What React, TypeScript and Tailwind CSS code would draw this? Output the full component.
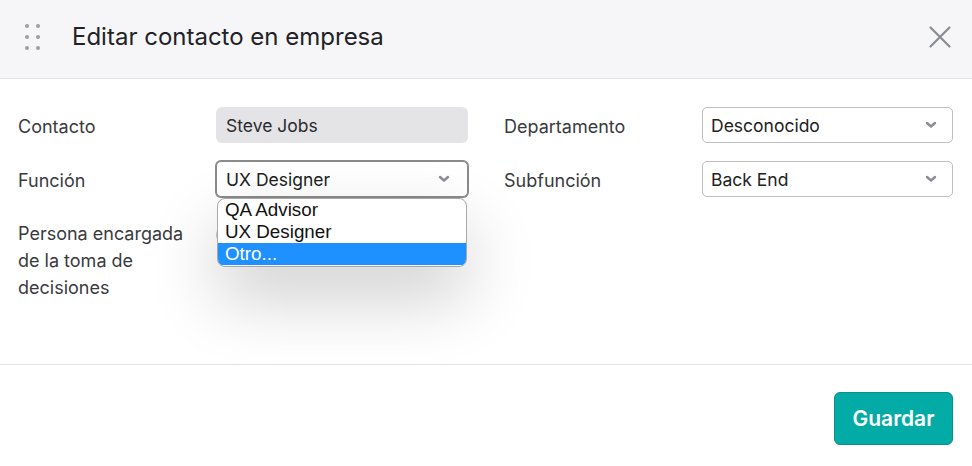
import React from 'react';

const font = { fontFamily: 'Inter, "Noto Sans", sans-serif' };

const Chevron = () => (
  <svg width="12" height="8" viewBox="0 0 12 8" className="shrink-0">
    <path d="M2 2l4 3.5L10 2" fill="none" stroke="#8c8c94" strokeWidth="2.4" strokeLinecap="round" strokeLinejoin="round" />
  </svg>
);

const Select = ({ value, focused }: { value: string; focused?: boolean }) => (
  <div
    className={
      focused
        ? 'flex h-[36px] items-center justify-between rounded-[5px] border border-[#8a8a8a] ring-1 ring-[#8a8a8a] bg-white pl-[9px] pr-[17px] text-[17.5px] text-[#222]'
        : 'flex h-[36px] items-center justify-between rounded-[5px] border border-[#bdbdc2] bg-white pl-[8px] pr-[15px] text-[17.5px] text-[#222]'
    }
  >
    <span className="pt-[2px]">{value}</span>
    <Chevron />
  </div>
);

const Label = ({ children }: { children: React.ReactNode }) => (
  <div className="flex h-[36px] items-center pt-[2px] text-[18px] text-[#3a3a3e]">{children}</div>
);

export default function App() {
  return (
    <div className="flex h-[466px] w-full flex-col bg-white" style={font}>
      {/* header */}
      <div className="flex h-[79px] shrink-0 items-center border-b border-[#e4e4e7] bg-[#f6f6f8] pb-[4px] pl-[25px] pr-[21px]">
        <div className="grid grid-cols-2 gap-x-[7px] gap-y-[7px]">
          <span className="h-[4px] w-[4px] rounded-full bg-[#9d9da6]" />
          <span className="h-[4px] w-[4px] rounded-full bg-[#9d9da6]" />
          <span className="h-[4px] w-[4px] rounded-full bg-[#9d9da6]" />
          <span className="h-[4px] w-[4px] rounded-full bg-[#9d9da6]" />
          <span className="h-[4px] w-[4px] rounded-full bg-[#9d9da6]" />
          <span className="h-[4px] w-[4px] rounded-full bg-[#9d9da6]" />
        </div>
        <h1 className="ml-[32px] flex-1 text-[24px] font-normal text-[#222226]">Editar contacto en empresa</h1>
        <svg width="22" height="22" viewBox="0 0 22 22">
          <path d="M1.5 1.5l19 19M20.5 1.5l-19 19" stroke="#8b8b94" strokeWidth="2.2" strokeLinecap="round" />
        </svg>
      </div>

      {/* body */}
      <div className="h-[285px] shrink-0 px-[18px] pt-[28px] pr-[19px]">
        <div className="grid grid-cols-[198px_252px_36px_198px_1fr] gap-y-[18px]">
          <Label>Contacto</Label>
          <div className="flex h-[36px] items-center rounded-[6px] bg-[#e4e4e7] pl-[10px] pt-[2px] text-[17.5px] text-[#2a2a2e]">Steve Jobs</div>
          <div />
          <Label>Departamento</Label>
          <Select value="Desconocido" />

          <Label>Función</Label>
          <div className="relative">
            <Select value="UX Designer" focused />
            <div
              className="absolute left-[1px] right-[1px] top-[37px] z-10 overflow-hidden rounded-[8px] border border-[#a8a8a8] bg-white pb-[1px] text-[18.8px] leading-[22px] text-[#111] shadow-[0_30px_70px_rgba(0,0,0,0.2)]"
              style={{ fontFamily: '"Liberation Sans", Arial, sans-serif' }}
            >
              <div className="h-[22px] pl-[7px]">QA Advisor</div>
              <div className="h-[22px] pl-[7px]">UX Designer</div>
              <div className="h-[22px] bg-[#1e90ff] pl-[7px] text-white">Otro...</div>
            </div>
          </div>
          <div />
          <Label>Subfunción</Label>
          <Select value="Back End" />

          <div className="pt-[5px] text-[18px] leading-[27px] text-[#3a3a3e]">
            Persona encargada
            <br />
            de la toma de
            <br />
            decisiones
          </div>
          <div className="pt-[11px]">
            <div className="h-[18px] w-[36px] rounded-full border border-[#bdbdc2] bg-white" />
          </div>
        </div>
      </div>

      {/* footer */}
      <div className="flex flex-1 items-start justify-end border-t border-[#e4e4e7] pr-[19px] pt-[27px]">
        <button className="h-[53px] w-[119px] rounded-[6px] border border-[#0c8f8a] bg-[#02aba6] text-[21px] font-semibold text-white">
          Guardar
        </button>
      </div>
    </div>
  );
}
